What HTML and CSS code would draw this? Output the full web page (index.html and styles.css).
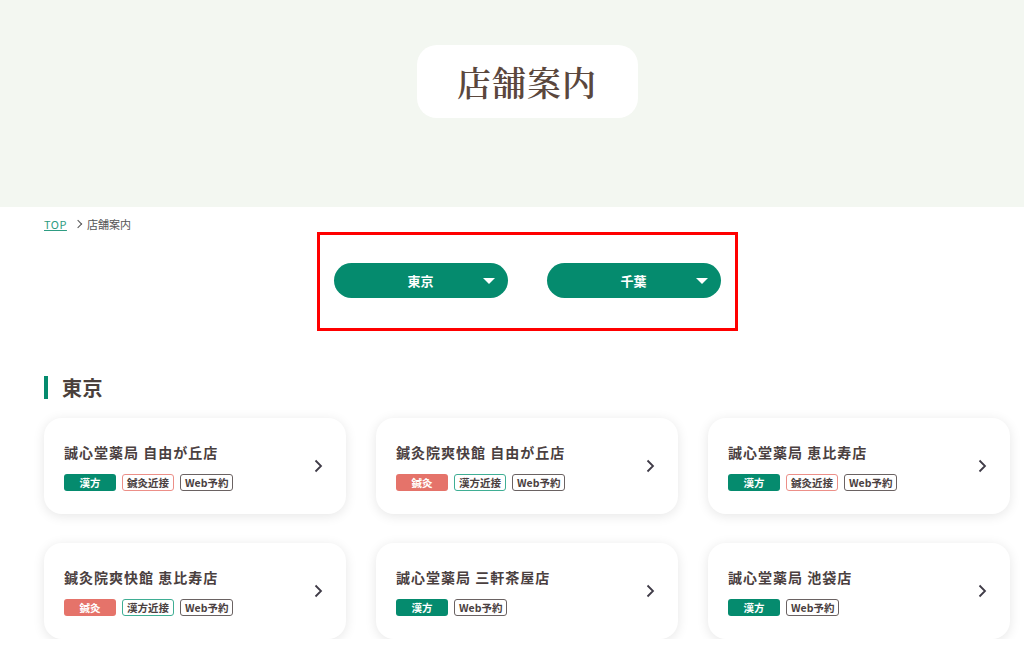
FILE: index.html
```html
<!DOCTYPE html>
<html lang="ja">

<head>
    <meta charset="UTF-8">
    <meta name="viewport" content="width=device-width, initial-scale=1.0">
    <title>店舗案内</title>
    <link rel="stylesheet" href="styles.css">
</head>

<body>
    <header class="page-header">
        <div class="inner">
            <h1 class="page-title">店舗案内</h1>
        </div>
    </header>

    <div class="inner">
        <nav class="breadcrumb">
            <a href="#">TOP</a>
            <span class="sep"></span>
            <span>店舗案内</span>
        </nav>

        <div class="area-select">
            <button class="area-button">東京</button>
            <button class="area-button">千葉</button>
        </div>

        <h2 class="area-heading">東京</h2>

        <div class="shop-list">
            <a class="shop-card" href="#">
                <div class="shop-body">
                    <p class="shop-name">誠心堂薬局 自由が丘店</p>
                    <div class="tags">
                        <span class="tag tag-kampo">漢方</span>
                        <span class="tag tag-line-red">鍼灸近接</span>
                        <span class="tag tag-line">Web予約</span>
                    </div>
                </div>
                <svg class="arrow" width="9" height="14" viewBox="0 0 9 14"><path d="M1.5 1.5 7 7l-5.5 5.5" fill="none" stroke="#3f3b47" stroke-width="1.8"/></svg>
            </a>
            <a class="shop-card" href="#">
                <div class="shop-body">
                    <p class="shop-name">鍼灸院爽快館 自由が丘店</p>
                    <div class="tags">
                        <span class="tag tag-shinkyu">鍼灸</span>
                        <span class="tag tag-line-green">漢方近接</span>
                        <span class="tag tag-line">Web予約</span>
                    </div>
                </div>
                <svg class="arrow" width="9" height="14" viewBox="0 0 9 14"><path d="M1.5 1.5 7 7l-5.5 5.5" fill="none" stroke="#3f3b47" stroke-width="1.8"/></svg>
            </a>
            <a class="shop-card" href="#">
                <div class="shop-body">
                    <p class="shop-name">誠心堂薬局 恵比寿店</p>
                    <div class="tags">
                        <span class="tag tag-kampo">漢方</span>
                        <span class="tag tag-line-red">鍼灸近接</span>
                        <span class="tag tag-line">Web予約</span>
                    </div>
                </div>
                <svg class="arrow" width="9" height="14" viewBox="0 0 9 14"><path d="M1.5 1.5 7 7l-5.5 5.5" fill="none" stroke="#3f3b47" stroke-width="1.8"/></svg>
            </a>
            <a class="shop-card" href="#">
                <div class="shop-body">
                    <p class="shop-name">鍼灸院爽快館 恵比寿店</p>
                    <div class="tags">
                        <span class="tag tag-shinkyu">鍼灸</span>
                        <span class="tag tag-line-green">漢方近接</span>
                        <span class="tag tag-line">Web予約</span>
                    </div>
                </div>
                <svg class="arrow" width="9" height="14" viewBox="0 0 9 14"><path d="M1.5 1.5 7 7l-5.5 5.5" fill="none" stroke="#3f3b47" stroke-width="1.8"/></svg>
            </a>
            <a class="shop-card" href="#">
                <div class="shop-body">
                    <p class="shop-name">誠心堂薬局 三軒茶屋店</p>
                    <div class="tags">
                        <span class="tag tag-kampo">漢方</span>
                        <span class="tag tag-line">Web予約</span>
                    </div>
                </div>
                <svg class="arrow" width="9" height="14" viewBox="0 0 9 14"><path d="M1.5 1.5 7 7l-5.5 5.5" fill="none" stroke="#3f3b47" stroke-width="1.8"/></svg>
            </a>
            <a class="shop-card" href="#">
                <div class="shop-body">
                    <p class="shop-name">誠心堂薬局 池袋店</p>
                    <div class="tags">
                        <span class="tag tag-kampo">漢方</span>
                        <span class="tag tag-line">Web予約</span>
                    </div>
                </div>
                <svg class="arrow" width="9" height="14" viewBox="0 0 9 14"><path d="M1.5 1.5 7 7l-5.5 5.5" fill="none" stroke="#3f3b47" stroke-width="1.8"/></svg>
            </a>
        </div>
    </div>
</body>

</html>
```

FILE: styles.css
```css
body {
    margin: 0;
    font-family: "Noto Sans CJK JP", "Noto Sans", sans-serif;
    color: #4a3f3b;
    background: #fff;
}

.inner {
    width: 966px;
    margin-left: 44px;
}

.page-header {
    background-color: #f3f7f1;
    height: 207px;
    padding-top: 45px;
    box-sizing: border-box;
}

.page-header .inner {
    display: flex;
    justify-content: center;
}

.page-title {
    margin: 0;
    width: 221px;
    height: 73px;
    line-height: 73px;
    text-align: center;
    background: #fff;
    border-radius: 20px;
    font-family: "Noto Serif CJK JP", "Noto Sans CJK JP", serif;
    font-size: 34px;
    font-weight: 600;
    color: #5a473d;
    letter-spacing: 1px;
}

.breadcrumb {
    display: flex;
    align-items: center;
    margin-top: 10px;
    font-size: 11px;
    line-height: 14px;
    color: #555;
}

.breadcrumb a {
    color: #2e9c82;
    text-decoration: underline;
    letter-spacing: 0.5px;
}

.breadcrumb .sep {
    width: 5px;
    height: 5px;
    border-top: 1.5px solid #555;
    border-right: 1.5px solid #555;
    transform: rotate(45deg);
    margin: 0 6px 0 8px;
}

.area-select {
    width: 421px;
    box-sizing: border-box;
    margin: 1px auto 0;
    border: 3px solid #f00;
    padding: 28px 0 30px;
    display: flex;
    justify-content: center;
    gap: 39px;
}

.area-button {
    position: relative;
    width: 174px;
    height: 35px;
    border: none;
    border-radius: 18px;
    background-color: #058b6e;
    color: #fff;
    font-family: inherit;
    font-size: 13px;
    font-weight: 700;
    cursor: pointer;
}

.area-button::after {
    content: "";
    position: absolute;
    right: 13px;
    top: 15px;
    border-left: 6px solid transparent;
    border-right: 6px solid transparent;
    border-top: 6px solid #fff;
}

.area-heading {
    margin: 45px 0 0;
    border-left: 4px solid #058b6e;
    padding-left: 14px;
    font-size: 20px;
    line-height: 23px;
    font-weight: 700;
    color: #4a3f3b;
    letter-spacing: 0.5px;
}

.shop-list {
    display: grid;
    grid-template-columns: repeat(3, 1fr);
    column-gap: 30px;
    row-gap: 29px;
    margin-top: 19px;
}

.shop-card {
    display: flex;
    align-items: center;
    justify-content: space-between;
    height: 96px;
    box-sizing: border-box;
    padding: 0 23px 0 20px;
    background: #fff;
    border-radius: 18px;
    box-shadow: 0 2px 12px rgba(0, 0, 0, 0.1);
    text-decoration: none;
    color: inherit;
}

.shop-name {
    margin: 0 0 12px;
    font-size: 14px;
    line-height: 20px;
    font-weight: 700;
    color: #4a4040;
    letter-spacing: 1px;
}

.tags {
    display: flex;
    gap: 6px;
}

.tag {
    min-width: 52px;
    height: 17px;
    box-sizing: border-box;
    padding: 0 4px;
    border-radius: 3px;
    font-size: 10.5px;
    line-height: 15px;
    font-weight: 700;
    text-align: center;
    border: 1px solid transparent;
}

.tag-kampo {
    background-color: #058b6e;
    color: #fff;
}

.tag-shinkyu {
    background-color: #e5736a;
    color: #fff;
}

.tag-line {
    border-color: #6a6262;
    color: #4a4040;
}

.tag-line-red {
    border-color: #ec8f88;
    color: #4a4040;
}

.tag-line-green {
    border-color: #3fae94;
    color: #4a4040;
}

.arrow {
    flex-shrink: 0;
}
```
